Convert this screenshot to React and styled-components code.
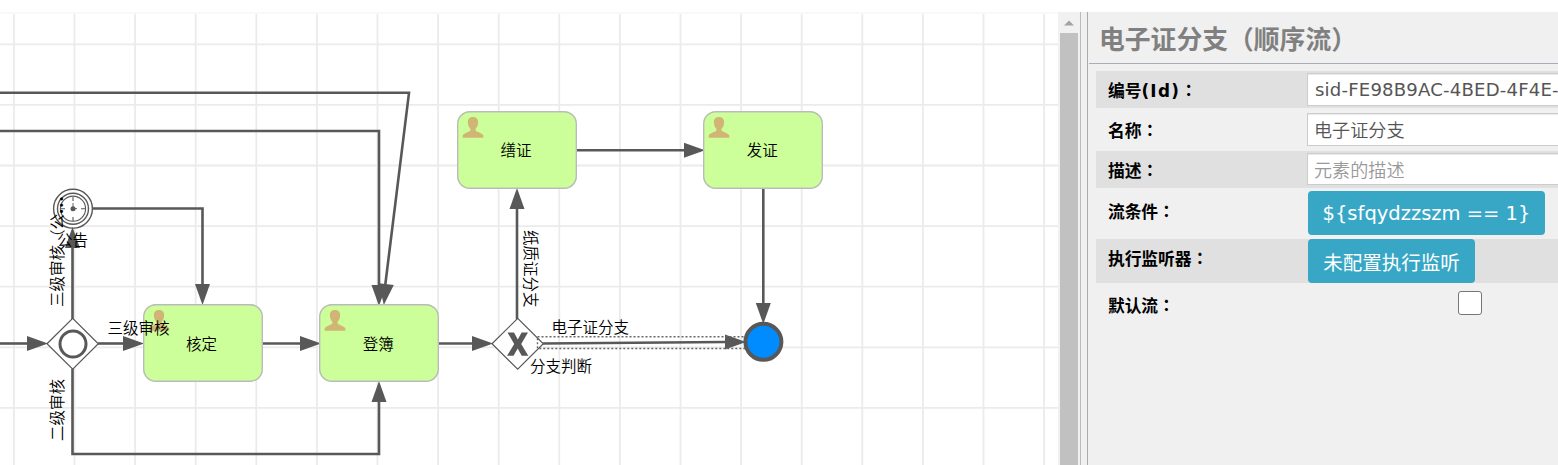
import React from 'react';
import styled, { createGlobalStyle } from 'styled-components';

const Global = createGlobalStyle`
  * { box-sizing: border-box; }
  body { margin: 0; background: #fff; overflow: hidden; }
`;

const cjk = '"Noto Sans CJK SC", sans-serif';

const Page = styled.div`
  display: flex;
  height: 465px;
  padding-top: 12px;
  overflow: hidden;
`;

const Canvas = styled.main`
  position: relative;
  width: 1058px;
  flex: none;
  overflow: hidden;
`;

const Board = styled.div`
  position: absolute;
  left: 0;
  top: -12px;
  width: 1058px;
  height: 465px;
`;

const Layer = styled.svg`
  position: absolute;
  inset: 0;
`;

const Task = styled.div`
  position: absolute;
  left: ${p => p.$x}px;
  top: ${p => p.$y}px;
  width: 120px;
  height: 78px;
  padding: 0 2px 1px 0;
  border-radius: 13px;
  background: #cf9;
  box-shadow: inset 0 0 0 1.4px #bbb;
  display: flex;
  align-items: center;
  justify-content: center;
  font: 350 15.5px/20px ${cjk};
  color: #000;
`;

const UserIcon = styled.svg`
  position: absolute;
  left: 5px;
  top: 5px;
`;

const Label = styled.span`
  position: absolute;
  left: ${p => p.$x}px;
  top: ${p => p.$y}px;
  font: 350 15.5px/20px ${cjk};
  color: #000;
  white-space: nowrap;
  transform-origin: 0 0;
  transform: rotate(${p => p.$turn || 0}deg);
`;

const Dots = styled.span`
  font-weight: 700;
  letter-spacing: 1.2px;
`;

const Scrollbar = styled.div`
  width: 22px;
  flex: none;
  background: #f1f1f1;
  display: flex;
  flex-direction: column;
  align-items: center;
`;

const ScrollUp = styled.div`
  height: 21px;
  display: flex;
  align-items: center;
`;

const Thumb = styled.div`
  width: 18px;
  flex: 1;
  background: #c1c1c1;
`;

const Splitter = styled.div`
  width: 8px;
  flex: none;
  background: #f0f0f0;
  border-left: 1px solid #bbb;
  border-right: 1px solid #aaa;
`;

const Panel = styled.aside`
  flex: 1;
  min-width: 0;
  background: #f0f0f0;
  padding-left: 1px;
  overflow: hidden;
`;

const Title = styled.h1`
  margin: 0 0 7px;
  height: 52px;
  padding-left: 10px;
  border-bottom: 1px solid #a9adb8;
  font: 700 25.8px/51px ${cjk};
  color: #808080;
  white-space: nowrap;
`;

const Row = styled.div`
  display: flex;
  align-items: flex-start;
  height: ${p => p.$h}px;
  margin-left: 7px;
  padding: ${p => p.$pad}px 0 0 12px;
  background: ${p => (p.$shade ? '#e0e0e0' : 'transparent')};
`;

const Name = styled.div`
  width: ${p => p.$w || 199}px;
  flex: none;
  padding-top: ${p => p.$drop}px;
  font: 700 16.8px/22px "DejaVu Sans", ${cjk};
  letter-spacing: -0.1px;
  color: #000;
  white-space: nowrap;

  &::after {
    content: '：';
    font-family: "Noto Sans CJK TC", sans-serif;
  }
`;

const Latin = styled.span`
  letter-spacing: 1.3px;
`;

const Field = styled.div`
  flex: none;
  width: 300px;
  height: ${p => p.$h || 33}px;
  padding-left: ${p => (p.$latin ? 7 : 6)}px;
  border: 1px solid #ccc;
  background: #fff;
  box-shadow: inset 0 1px 1px rgba(0, 0, 0, 0.09);
  font: ${p => (p.$latin ? '400 18.1px/32px "DejaVu Sans"' : '350 18.1px/31px "Noto Sans CJK SC"')}, sans-serif;
  letter-spacing: ${p => (p.$latin ? 0.18 : 0)}px;
  color: ${p => (p.$muted ? '#999' : '#555')};
  white-space: nowrap;
`;

const Button = styled.button`
  width: ${p => p.$w}px;
  height: 44px;
  flex: none;
  padding: 0;
  border: 0;
  border-radius: 4px;
  background: #38a7c6;
  color: #fff;
  font: 400 19.5px/45px ${p => (p.$latin ? '"DejaVu Sans"' : '"Noto Sans CJK SC"')}, sans-serif;
  white-space: nowrap;
`;

const Check = styled.span`
  width: 24px;
  height: 24px;
  margin-left: 150px;
  border: 1.5px solid #767676;
  border-radius: 3px;
  background: #fff;
`;

const tasks = [
  { x: 142.6, y: 304, text: '核定' },
  { x: 319.3, y: 304, text: '登簿' },
  { x: 457, y: 110.6, text: '缮证' },
  { x: 703.3, y: 110.6, text: '发证' },
];

const edges = [
  'M0 92.8H409L385 287',
  'M0 131H379V287',
  'M92 208.5H202.5V287',
  'M72.5 319V247',
  'M0 343.5H28',
  'M98 343.5H124',
  'M262 343.5H301',
  'M438 343.5H473',
  'M72.5 369V454H379V401',
  'M517 319V207',
  'M576 150.3H685',
  'M763.3 188V303',
  'M543 343.5L726 342',
];

const arrows = [
  [202.5, 305, 90], [379, 306, 90], [383.8, 305, 97],
  [48, 343.5, 0], [144, 343.5, 0], [321, 343.5, 0], [493, 343.5, 0],
  [379, 381, -90], [517, 188, -90], [705, 150.3, 0], [763.3, 324, 90], [746, 342, 0],
];

const columns = Array.from({ length: 18 }, (_, i) => 13.9 + i * 60.6);
const lines = Array.from({ length: 7 }, (_, i) => 44.3 + i * 60.6);

function Person() {
  return (
    <UserIcon width="22" height="23" viewBox="0 0 22 23">
      <path
        fill="#d1b575"
        d="M11 1C7.2 1 5.7 3.2 5.9 6.8C6 9.3 6.9 11.4 8.4 12.7V14.7C6.5 16.2 1 17.4 .7 19.5V21.7H21.3V19.5C21 17.4 15.5 16.2 13.6 14.7V12.7C15.1 11.4 16 9.3 16.1 6.8C16.3 3.2 14.8 1 11 1Z"
      />
    </UserIcon>
  );
}

export default function App() {
  return (
    <Page>
      <Global />
      <Canvas>
        <Board>
          <Layer width="1058" height="465">
            <path d="M0 12.7H1058" stroke="#f8f8f8" strokeWidth="2" />
            <g stroke="#ebebeb" strokeWidth="1.8">
              {columns.map(x => <path key={x} d={`M${x} 14V465`} />)}
              {lines.map(y => <path key={y} d={`M0 ${y}H1058`} />)}
            </g>
            <g fill="none" stroke="#585858" strokeWidth="2.6">
              {edges.map(d => <path key={d} d={d} />)}
            </g>
            <g fill="#585858">
              {arrows.map(([x, y, turn]) => (
                <path key={`${x}-${y}`} d="M0 0L-21 -7.5V7.5Z" transform={`translate(${x} ${y}) rotate(${turn})`} />
              ))}
            </g>
            <g fill="#fff" stroke="#585858" strokeWidth="1.2">
              <path d="M47 343.8L72.7 318.4L98.3 343.8L72.7 369.2Z" />
              <path d="M492 343.8L517.7 318.4L543.3 343.8L517.7 369.2Z" />
            </g>
            <circle cx="73" cy="344" r="13" fill="none" stroke="#585858" strokeWidth="3" />
            <path d="M507.5 332.5H514L517.8 339.5L521.6 332.5H528L521.2 344L528.3 355.8H521.7L517.7 348.6L513.5 355.8H507L514.2 344Z" fill="#585858" />
            <g fill="none" stroke="#585858" strokeWidth="1.4">
              <circle cx="73" cy="208.7" r="19.4" fill="#fff" />
              <circle cx="73" cy="208.7" r="15.5" />
              <circle cx="73" cy="208.7" r="12.6" strokeWidth="1.1" />
              <path d="M73 197V201M73 217V221M61 208.7H65M81 208.7H85" strokeWidth="1.1" />
              <path d="M73 203V208.7H77" strokeWidth="0.9" />
            </g>
            <circle cx="73" cy="208.7" r="2.5" fill="#585858" />
            <rect x="537.5" y="336.7" width="212" height="11.8" fill="none" stroke="#666" strokeWidth="1.4" strokeDasharray="2 2" />
            <circle cx="763.4" cy="341.8" r="18" fill="#008cff" stroke="#585858" strokeWidth="4" />
            <path d="M72.5 227L65 248H80Z" fill="#585858" />
          </Layer>
          {tasks.map(t => (
            <Task key={t.text} $x={t.x} $y={t.y}>
              <Person />
              {t.text}
            </Task>
          ))}
          <Label $x={107.5} $y={316.5}>三级审核</Label>
          <Label $x={57} $y={229}>公告</Label>
          <Label $x={551.5} $y={315.5}>电子证分支</Label>
          <Label $x={530} $y={355}>分支判断</Label>
          <Label $x={45.5} $y={307} $turn={-90}>三级审核（公<Dots>...</Dots></Label>
          <Label $x={45.5} $y={441} $turn={-90}>二级审核</Label>
          <Label $x={541.5} $y={230} $turn={90}>纸质证分支</Label>
        </Board>
      </Canvas>
      <Scrollbar>
        <ScrollUp>
          <svg width="10" height="6"><path d="M0 5.5L5 .5L10 5.5Z" fill="#a3a3a3" /></svg>
        </ScrollUp>
        <Thumb />
      </Scrollbar>
      <Splitter />
      <Panel>
        <Title>电子证分支（顺序流）</Title>
        <Row $h={37} $pad={2} $shade>
          <Name $drop={6}>编号<Latin>(Id)</Latin></Name>
          <Field $latin>sid-FE98B9AC-4BED-4F4E-</Field>
        </Row>
        <Row $h={43} $pad={5}>
          <Name $drop={6}>名称</Name>
          <Field>电子证分支</Field>
        </Row>
        <Row $h={37} $pad={2} $shade>
          <Name $drop={6}>描述</Name>
          <Field $muted $h={32}>元素的描述</Field>
        </Row>
        <Row $h={51} $pad={3}>
          <Name $w={200} $drop={9}>流条件</Name>
          <Button $w={237} $latin>{'${sfqydzzszm == 1}'}</Button>
        </Row>
        <Row $h={44} $pad={0} $shade>
          <Name $w={200} $drop={8}>执行监听器</Name>
          <Button $w={167}>未配置执行监听</Button>
        </Row>
        <Row $h={50} $pad={8}>
          <Name $w={200} $drop={3}>默认流</Name>
          <Check />
        </Row>
      </Panel>
    </Page>
  );
}
